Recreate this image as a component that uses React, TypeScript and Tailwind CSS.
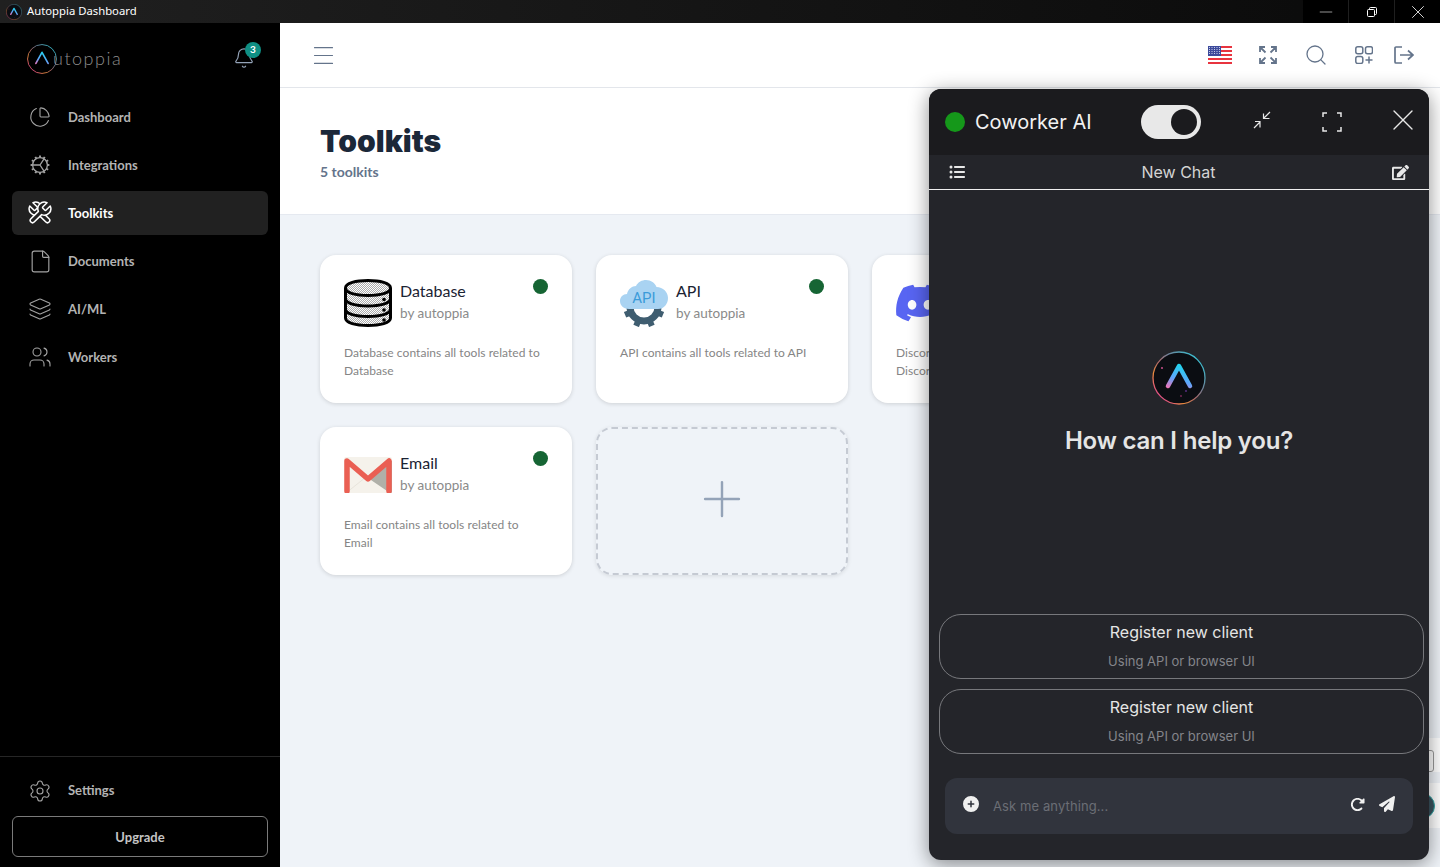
import React from 'react';
import { Bell, ChartPie, File, Layers, Menu, Minus, Plus, Search, Settings, Users, X } from 'lucide-react';
import { FaDiscord, FaListUl, FaPaperPlane, FaRotateRight, FaCirclePlus } from 'react-icons/fa6';
import { FaEdit } from 'react-icons/fa';

const LogoMark = ({ size, id, thin }: { size: number; id: string; thin?: boolean }) => (
  <svg width={size} height={size} viewBox="0 0 54 54" fill="none">
    <defs>
      <linearGradient id={`${id}-ring`} x1="48" y1="6" x2="6" y2="48" gradientUnits="userSpaceOnUse">
        <stop offset="0" stopColor="#35c6d8" />
        <stop offset="0.35" stopColor="#6f7f95" />
        <stop offset="0.55" stopColor="#b06a6a" />
        <stop offset="0.75" stopColor="#e88a3c" />
        <stop offset="1" stopColor="#e0409a" />
      </linearGradient>
      <linearGradient id={`${id}-a`} x1="27" y1="14" x2="18" y2="38" gradientUnits="userSpaceOnUse">
        <stop offset="0" stopColor="#22d3ee" />
        <stop offset="0.55" stopColor="#60a5fa" />
        <stop offset="1" stopColor="#f472b6" />
      </linearGradient>
    </defs>
    <circle cx="27" cy="27" r="26" fill={thin ? 'none' : '#0b0d12'} stroke={`url(#${id}-ring)`} strokeWidth={thin ? 1.6 : 1.3} />
    <path d="M16 35 L27 15 L38 35" stroke={`url(#${id}-a)`} strokeWidth={thin ? 3 : 4.5} strokeLinecap="round" strokeLinejoin="round" />
    {!thin && (
      <>
        <circle cx="10" cy="17" r="0.9" fill="#e0559a" />
        <circle cx="29" cy="45" r="0.7" fill="#e0409a" />
        <circle cx="34" cy="40" r="0.7" fill="#a855f7" />
      </>
    )}
  </svg>
);

const IntegrationsIcon = () => {
  const teeth = Array.from({ length: 12 }, (_, i) => i * 30);
  return (
    <svg width="20" height="20" viewBox="0 0 20 20" fill="none" stroke="#a3a3a3" strokeWidth="1.3">
      <circle cx="10" cy="10" r="7.4" />
      {teeth.map((deg) => (
        <path key={deg} d="M10 0.6V2.6" strokeWidth="1.9" transform={`rotate(${deg} 10 10)`} />
      ))}
      <path d="M10 10L3 10M10 10L14 3.8M10 10L14 16.2" />
    </svg>
  );
};

// two crossed wrenches, the second one drawn over the first
const ToolsIcon = () => {
  const wrench =
    'M14.7 6.3a1 1 0 0 0 0 1.4l1.6 1.6a1 1 0 0 0 1.4 0l3.77-3.77a6 6 0 0 1-7.94 7.94l-6.91 6.91a2.12 2.12 0 0 1-3-3l6.91-6.91a6 6 0 0 1 7.94-7.94l-3.76 3.76z';
  return (
    <svg width="26" height="26" viewBox="0 0 24 24" fill="#212121" stroke="#fff" strokeWidth="1.400" strokeLinejoin="round">
      <path d={wrench} transform="matrix(-1 0 0 1 24 0)" />
      <path d={wrench} />
    </svg>
  );
};

const DatabaseIcon = () => (
  <svg width="48" height="48" viewBox="0 0 48 48" fill="none">
    <defs>
      <pattern id="db-dots" width="2" height="2" patternUnits="userSpaceOnUse">
        <rect width="2" height="2" fill="#fff" />
        <rect width="1" height="1" fill="#aaa" />
        <rect x="1" y="1" width="1" height="1" fill="#aaa" />
      </pattern>
    </defs>
    <path d="M1.500 9C1.500 4 12 1.500 24 1.500S46.500 4 46.500 9v30c0 5-10.500 7.500-22.500 7.500S1.500 44 1.500 39Z" fill="url(#db-dots)" stroke="#000" strokeWidth="3" />
    <path d="M1.500 9c0 5 10.500 7.500 22.500 7.500S46.500 14 46.500 9M1.500 19.500c0 5 10.500 7.500 22.500 7.500s22.500-2.500 22.500-7.500M1.500 30c0 5 10.500 7.500 22.500 7.500S46.500 35 46.500 30" stroke="#000" strokeWidth="3" />
    <circle cx="40" cy="20.500" r="1.800" fill="#000" />
    <circle cx="40" cy="31" r="1.800" fill="#000" />
    <circle cx="40" cy="41" r="1.800" fill="#000" />
  </svg>
);

const ApiIcon = () => {
  const teeth = Array.from({ length: 8 }, (_, i) => 22.500 + i * 45);
  return (
    <svg width="48" height="48" viewBox="0 0 48 48" fill="none">
      <circle cx="24" cy="28" r="14" stroke="#3f5d70" strokeWidth="7" />
      {teeth.map((deg) => (
        <rect key={deg} x="21" y="7.500" width="6" height="7" fill="#3f5d70" transform={`rotate(${deg} 24 28)`} />
      ))}
      <path d="M9 30C3 30 0 26 0 22c0-4 3-7 7-7 1-5 5-8 9-8 2-4 6-6 10-6 5 0 9 3 10.500 7C43 8 48 13 48 19c0 6-4 11-10 11Z" fill="#a9d3f2" />
      <text x="24" y="24" textAnchor="middle" fontFamily="Roboto, sans-serif" fontSize="15" fill="#3b9bd9">API</text>
    </svg>
  );
};

const GmailIcon = () => (
  <svg width="48" height="36" viewBox="0 0 48 36" fill="none">
    <rect width="48" height="36" rx="2" fill="#f5f2eb" />
    <path d="M46 4L24 21l0 0 22 15h-1a2 2 0 0 0 3-2V4Z" fill="#b0b0a8" />
    <path d="M2 36L22 20" stroke="#e4e0d6" strokeWidth="0.800" />
    <path d="M3 34V4l21 18L45 4v30" stroke="#ea5f53" strokeWidth="5.500" strokeLinejoin="round" strokeLinecap="round" />
  </svg>
);

const FlagIcon = () => (
  <svg width="24" height="18" viewBox="0 0 24 18">
    {[0, 1, 2, 3, 4, 5, 6, 7, 8].map((i) => (
      <rect key={i} y={i * 2} width="24" height="2" fill={i % 2 === 0 ? '#e8343f' : '#fff'} />
    ))}
    <rect width="13" height="10" fill="#3c4a9c" />
    {[1.500, 3.500, 5.500, 7.500].map((y) =>
      [1.500, 4, 6.500, 9, 11.500].map((x) => <circle key={`${x}-${y}`} cx={x} cy={y} r="0.550" fill="#dfe3f5" />)
    )}
  </svg>
);

const ExpandIcon = () => (
  <svg width="18" height="18" viewBox="0 0 18 18" fill="none" stroke="#64748b" strokeWidth="1.800">
    <path d="M1 6V1h5M1 1l5.500 5.500M12 1h5v5M17 1l-5.500 5.500M1 12v5h5M1 17l5.500-5.500M17 12v5h-5M17 17l-5.500-5.500" />
  </svg>
);

const AppsIcon = () => (
  <svg width="18" height="18" viewBox="0 0 18 18" fill="none" stroke="#64748b" strokeWidth="1.500">
    <rect x="0.800" y="0.800" width="7" height="7" rx="2" />
    <rect x="10.500" y="0.800" width="7" height="7" rx="2" />
    <rect x="0.800" y="10.500" width="7" height="7" rx="2" />
    <path d="M14 10.500v7M10.500 14h7" />
  </svg>
);

const LogoutIcon = () => (
  <svg width="20" height="18" viewBox="0 0 20 18" fill="none" stroke="#64748b" strokeWidth="1.700">
    <path d="M8 1H2a1 1 0 0 0-1 1v14a1 1 0 0 0 1 1h6" />
    <path d="M6 9h13M14 4.500L19 9l-5 4.500" />
  </svg>
);

const RestoreIcon = () => (
  <svg width="10" height="10" viewBox="0 0 10 10" fill="none" stroke="#fff" strokeWidth="1">
    <rect x="0.500" y="2.500" width="7" height="7" rx="1" />
    <path d="M2.500 2.500V1.500a1 1 0 0 1 1-1h5a1 1 0 0 1 1 1v5a1 1 0 0 1-1 1h-1" />
  </svg>
);

const navItems = [
  { label: 'Dashboard', icon: <ChartPie size={22} strokeWidth={1.200} color="#a3a3a3" /> },
  { label: 'Integrations', icon: <IntegrationsIcon /> },
  { label: 'Toolkits', icon: <ToolsIcon />, active: true },
  { label: 'Documents', icon: <File size={25} strokeWidth={1.100} color="#a3a3a3" /> },
  { label: 'AI/ML', icon: <Layers size={24} strokeWidth={1.100} color="#a3a3a3" /> },
  { label: 'Workers', icon: <Users size={24} strokeWidth={1.100} color="#a3a3a3" /> },
];

const toolkits = [
  { name: 'Database', icon: <DatabaseIcon />, desc: 'Database contains all tools related to Database' },
  { name: 'API', icon: <ApiIcon />, desc: 'API contains all tools related to API' },
  { name: 'Discord', icon: <FaDiscord className="shrink-0" size={52} color="#5865f2" />, desc: 'Discord contains all tools related to Discord' },
  { name: 'Email', icon: <GmailIcon />, desc: 'Email contains all tools related to Email' },
];

const Sidebar = () => (
  <aside className="flex w-[280px] shrink-0 flex-col bg-black font-['Lato',sans-serif]">
    <div className="flex h-[72px] items-center justify-between pl-[27px] pr-[23px]">
      <div className="flex items-center">
        <LogoMark size={30} id="side" thin />
        <span className="ml-[-4px] mt-[-2px] text-[18px] font-light tracking-[1.500px] text-[#8c8c8c]">utoppia</span>
      </div>
      <div className="relative mt-[-1px] h-[24px] w-[24px]">
        <Bell size={22} strokeWidth={1.300} color="#94a3b8" />
        <span className="absolute right-[-4px] top-[-5px] flex h-[16px] w-[16px] items-center justify-center rounded-full bg-[#0f8f84] text-[10px] font-bold text-white">3</span>
      </div>
    </div>
    <nav className="flex flex-col gap-1 px-3">
      {navItems.map((item) => (
        <div
          key={item.label}
          className={`flex h-[44px] items-center rounded-md ${item.active ? 'bg-[#212121] text-white' : 'text-[#b3b3b3]'}`}
        >
          <div className="flex w-[56px] justify-center">{item.icon}</div>
          <span className="pt-[2px] text-[13px] font-bold">{item.label}</span>
        </div>
      ))}
    </nav>
    <div className="mt-auto border-t border-[#262626] px-3 pb-[10px]">
      <div className="flex h-[59px] items-center pt-[9px] text-[#b3b3b3]">
        <div className="flex w-[56px] justify-center">
          <Settings size={24} strokeWidth={1.100} color="#a3a3a3" />
        </div>
        <span className="text-[13px] font-bold">Settings</span>
      </div>
      <div className="flex h-[41px] items-center justify-center rounded-md border border-[#7a7a7a] pt-[2px] text-[13px] font-bold text-[#c4c4c4]">Upgrade</div>
    </div>
  </aside>
);

const ToolkitCard = ({ name, icon, desc }: { name: string; icon: React.ReactNode; desc: string }) => (
  <div className="h-[148px] rounded-[16px] bg-white p-6 shadow-[0_1px_4px_rgba(0,0,0,0.14)]">
    <div className="flex items-start">
      <div className="flex h-[48px] w-[48px] shrink-0 items-center justify-center">{icon}</div>
      <div className="ml-2 flex-1 pt-[1px]">
        <div className="text-[16px] leading-[22px] text-[#1b2333]">{name}</div>
        <div className="text-[13.500px] leading-[22px] text-[#8a8a8a]">by autoppia</div>
      </div>
      <div className="h-[15px] w-[15px] rounded-full bg-[#166534]" />
    </div>
    <p className="mt-[17px] text-[12px] leading-[18px] tracking-[0.050px] text-[#858585]">{desc}</p>
  </div>
);

const ChatPanel = () => (
  <div className="absolute left-[929px] top-[89px] flex h-[771px] w-[500px] flex-col overflow-hidden rounded-[12px] bg-[#24252a] font-['Inter',sans-serif] shadow-[0_4px_20px_rgba(0,0,0,0.45)]">
    <div className="flex h-[66px] shrink-0 items-center bg-[#1b1b1e] pl-4">
      <div className="h-[20px] w-[20px] rounded-full bg-[#15981a]" />
      <span className="ml-[10px] whitespace-nowrap text-[20px] text-[#f2f2f2]">Coworker AI</span>
      <div className="ml-[49px] flex h-[34px] w-[60px] shrink-0 items-center justify-end rounded-full bg-[#e8e8e8] pr-1">
        <div className="h-[26px] w-[26px] rounded-full bg-[#1b1b1e]" />
      </div>
      <svg className="ml-[52px] mt-[-4px] shrink-0" width="18" height="18" viewBox="0 0 18 18" fill="none" stroke="#e8e8e8" strokeWidth="1.200">
        <path d="M17 1l-6.500 6.500M10.500 2.500v5h6M1 17l6-6M2 10.500h5v6" />
      </svg>
      <svg className="ml-[51px] shrink-0" width="20" height="20" viewBox="0 0 20 20" fill="none" stroke="#e8e8e8" strokeWidth="1.500">
        <path d="M1 5V1h4M15 1h4v4M1 15v4h4M19 15v4h-4" />
      </svg>
      <X className="ml-[43px] mt-[-4px] shrink-0" size={36} strokeWidth={0.900} color="#e8e8e8" />
    </div>
    <div className="flex h-[35px] shrink-0 items-center justify-between border-b border-[#f0f0f0] bg-[#24252a] pl-5 pr-5">
      <FaListUl size={16} color="#e8e8e8" />
      <span className="text-[16px] text-[#d4d4d4]">New Chat</span>
      <FaEdit size={17} color="#e8e8e8" />
    </div>
    <div className="flex flex-1 flex-col items-center justify-center pt-[6px]">
      <LogoMark size={54} id="chat" />
      <div className="mt-[18px] text-[24px] font-semibold tracking-[-0.200px] text-[#e5e5e5]">How can I help you?</div>
    </div>
    <div className="flex flex-col gap-[10px] pl-[10px] pr-[5px]">
      {[0, 1].map((i) => (
        <div key={i} className="flex h-[65px] flex-col items-center rounded-[22px] border border-[#77787c] pt-[5px]">
          <span className="text-[16px] leading-[24px] text-[#e5e5e5]">Register new client</span>
          <span className="mt-[8px] text-[13px] leading-[18px] text-[#85868a]">Using API or browser UI</span>
        </div>
      ))}
    </div>
    <div className="mb-[26px] ml-4 mr-4 mt-[24px] flex h-[56px] items-center rounded-[12px] bg-[#31343d] pl-[18px] pr-[18px]">
      <FaCirclePlus className="mt-[-4px]" size={16} color="#f0f0f0" />
      <span className="ml-[14px] pt-[2px] text-[13px] tracking-[0.100px] text-[#6b6e75]">Ask me anything...</span>
      <FaRotateRight className="ml-auto mt-[-4px]" size={15} color="#f0f0f0" />
      <FaPaperPlane className="ml-[14px] mt-[-4px]" size={16} color="#f0f0f0" />
    </div>
  </div>
);

export default function App() {
  return (
    <div className="relative flex h-[867px] w-[1440px] flex-col overflow-hidden bg-[#eff3f8] font-['Lato',sans-serif]">
      {/* window title bar */}
      <div className="flex h-[23px] shrink-0 items-center bg-gradient-to-r from-[#202020] to-[#0a0a0a] pl-[6px] font-['Noto_Sans',sans-serif] text-[11.300px] text-white">
        <LogoMark size={16} id="title" />
        <span className="ml-[5px]">Autoppia Dashboard</span>
        <div className="ml-auto flex h-full bg-black">
          <div className="flex w-[45px] items-center justify-center"><Minus size={20} color="#fff" strokeWidth={0.700} /></div>
          <div className="flex w-[46px] items-center justify-center border-l border-[#1f1f1f]"><RestoreIcon /></div>
          <div className="flex w-[46px] items-center justify-center border-l border-[#1f1f1f]"><X size={22} color="#fff" strokeWidth={0.900} /></div>
        </div>
      </div>
      <div className="flex min-h-0 flex-1">
        <Sidebar />
        <main className="flex min-w-0 flex-1 flex-col">
          <header className="flex h-[65px] shrink-0 items-center border-b border-[#e3e6eb] bg-white pl-[30px] pr-[26px] shadow-[0_1px_2px_rgba(0,0,0,0.05)]">
            <Menu size={27} strokeWidth={1} color="#64748b" />
            <div className="ml-auto flex items-center">
              <FlagIcon />
              <div className="ml-[27px]"><ExpandIcon /></div>
              <Search className="ml-[27px]" size={24} strokeWidth={1.300} color="#64748b" />
              <div className="ml-[27px]"><AppsIcon /></div>
              <div className="ml-[21px]"><LogoutIcon /></div>
            </div>
          </header>
          <div className="h-[127px] shrink-0 border-b border-[#e5e9f0] bg-white pl-[40px] pt-[33px]">
            <h1 className="font-['Inter',sans-serif] text-[30px] font-black leading-[40px] text-[#1b2839]">Toolkits</h1>
            <p className="mt-[1px] text-[14px] font-bold leading-[20px] text-[#64748b]">5 toolkits</p>
          </div>
          <div className="grid grid-cols-[252px_252px_252px] gap-x-[24px] gap-y-[24px] pl-[40px] pt-[40px]">
            {toolkits.map((t) => (
              <ToolkitCard key={t.name} {...t} />
            ))}
            <div className="col-start-2 row-start-2 flex h-[148px] items-center justify-center rounded-[16px] border-2 border-dashed border-[#c5cad3] pb-[4px] shadow-[0_1px_4px_rgba(0,0,0,0.1)]">
              <Plus size={58} strokeWidth={1} color="#94a3b8" />
            </div>
          </div>
        </main>
      </div>
      {/* bits of a page widget showing past the panel's right edge */}
      <div className="absolute left-[1425px] top-[738px] h-[34px] w-[15px] bg-white">
        <div className="ml-[1px] mt-[12px] h-[22px] w-[8px] rounded-[3px] border border-[#9a9a9a]" />
      </div>
      <div className="absolute left-[1425px] top-[783px] flex h-[45px] w-[15px] items-center bg-white">
        <div className="ml-[-16px] h-[26px] w-[26px] rounded-full border border-[#2fa8a8] bg-[#3b5560]" />
      </div>
      <ChatPanel />
    </div>
  );
}
